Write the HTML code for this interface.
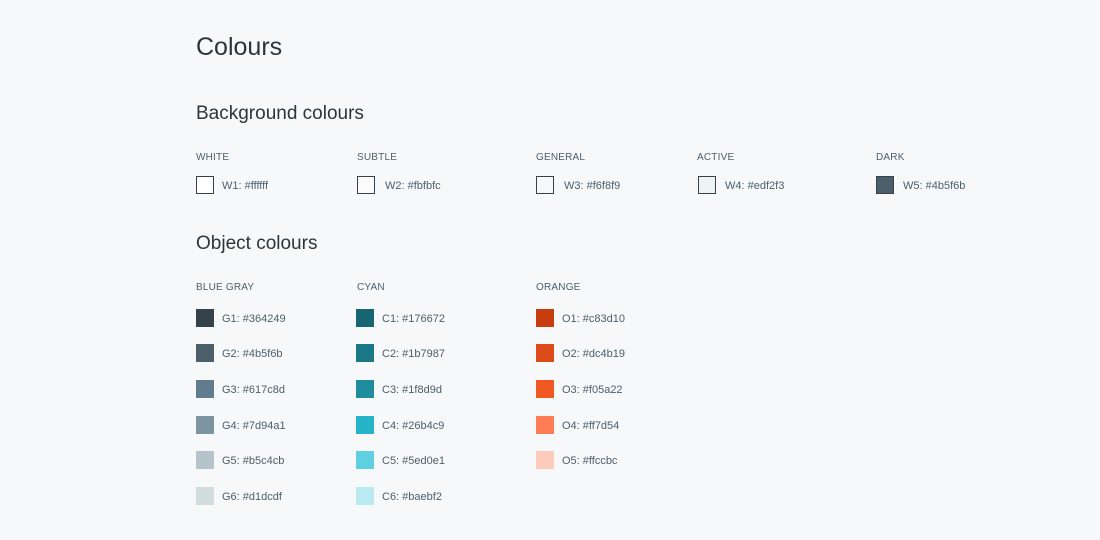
<!DOCTYPE html>
<html><head><style>
body{margin:0;background:#f6f8f9;font-family:"Liberation Sans",sans-serif;width:1100px;height:540px;position:relative;overflow:hidden;color:#2b353c}
h1{position:absolute;left:196px;top:33px;margin:0;font-weight:normal;font-size:25px;color:#2b353c}
h2{position:absolute;left:196px;margin:0;font-weight:normal;font-size:19px;color:#2b353c}
.cap{position:absolute;font-size:10px;color:#4b5f6b;letter-spacing:0.2px}
.sw{position:absolute;width:18px;height:18px;box-sizing:border-box}
.b{border:1.5px solid #364249}
.t{position:absolute;font-size:11px;color:#4b5f6b}
</style></head><body>
<h1>Colours</h1>
<h2 style="top:103px">Background colours</h2>
<h2 style="top:233px">Object colours</h2>

<div class="cap" style="left:196px;top:152px">WHITE</div>
<div class="cap" style="left:357px;top:152px">SUBTLE</div>
<div class="cap" style="left:536px;top:152px">GENERAL</div>
<div class="cap" style="left:697px;top:152px">ACTIVE</div>
<div class="cap" style="left:876px;top:152px">DARK</div>

<div class="sw b" style="left:196px;top:176px;background:#fff"></div><div class="t" style="left:222px;top:180px">W1: #ffffff</div>
<div class="sw b" style="left:357px;top:176px;background:#fbfbfc"></div><div class="t" style="left:385px;top:180px">W2: #fbfbfc</div>
<div class="sw b" style="left:536px;top:176px;background:#f6f8f9"></div><div class="t" style="left:564px;top:180px">W3: #f6f8f9</div>
<div class="sw b" style="left:698px;top:176px;background:#edf2f3"></div><div class="t" style="left:725px;top:180px">W4: #edf2f3</div>
<div class="sw b" style="left:876px;top:176px;background:#4b5f6b"></div><div class="t" style="left:903px;top:180px">W5: #4b5f6b</div>

<div class="cap" style="left:196px;top:282px">BLUE GRAY</div>
<div class="cap" style="left:357px;top:282px">CYAN</div>
<div class="cap" style="left:536px;top:282px">ORANGE</div>

<div class="sw" style="left:196px;top:309px;background:#364249"></div><div class="t" style="left:222px;top:313px">G1: #364249</div>
<div class="sw" style="left:196px;top:344px;background:#4b5f6b"></div><div class="t" style="left:222px;top:348px">G2: #4b5f6b</div>
<div class="sw" style="left:196px;top:380px;background:#617c8d"></div><div class="t" style="left:222px;top:384px">G3: #617c8d</div>
<div class="sw" style="left:196px;top:416px;background:#7d94a1"></div><div class="t" style="left:222px;top:420px">G4: #7d94a1</div>
<div class="sw" style="left:196px;top:451px;background:#b5c4cb"></div><div class="t" style="left:222px;top:455px">G5: #b5c4cb</div>
<div class="sw" style="left:196px;top:487px;background:#d1dcdf"></div><div class="t" style="left:222px;top:491px">G6: #d1dcdf</div>

<div class="sw" style="left:356px;top:309px;background:#176672"></div><div class="t" style="left:382px;top:313px">C1: #176672</div>
<div class="sw" style="left:356px;top:344px;background:#1b7987"></div><div class="t" style="left:382px;top:348px">C2: #1b7987</div>
<div class="sw" style="left:356px;top:380px;background:#1f8d9d"></div><div class="t" style="left:382px;top:384px">C3: #1f8d9d</div>
<div class="sw" style="left:356px;top:416px;background:#26b4c9"></div><div class="t" style="left:382px;top:420px">C4: #26b4c9</div>
<div class="sw" style="left:356px;top:451px;background:#5ed0e1"></div><div class="t" style="left:382px;top:455px">C5: #5ed0e1</div>
<div class="sw" style="left:356px;top:487px;background:#baebf2"></div><div class="t" style="left:382px;top:491px">C6: #baebf2</div>

<div class="sw" style="left:536px;top:309px;background:#c83d10"></div><div class="t" style="left:562px;top:313px">O1: #c83d10</div>
<div class="sw" style="left:536px;top:344px;background:#dc4b19"></div><div class="t" style="left:562px;top:348px">O2: #dc4b19</div>
<div class="sw" style="left:536px;top:380px;background:#f05a22"></div><div class="t" style="left:562px;top:384px">O3: #f05a22</div>
<div class="sw" style="left:536px;top:416px;background:#ff7d54"></div><div class="t" style="left:562px;top:420px">O4: #ff7d54</div>
<div class="sw" style="left:536px;top:451px;background:#ffccbc"></div><div class="t" style="left:562px;top:455px">O5: #ffccbc</div>
</body></html>
